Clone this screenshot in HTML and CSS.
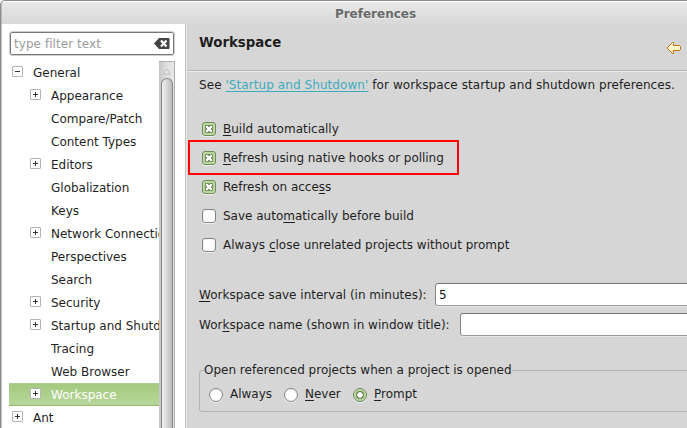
FILE: index.html
```html
<!DOCTYPE html>
<html lang="en">
<head>
<meta charset="utf-8">
<title>Preferences</title>
<link rel="stylesheet" href="styles.css">
</head>
<body>
<div class="window">
  <header class="titlebar">Preferences</header>
  <div class="body">
    <aside class="sidebar">
      <div class="filter">
        <span class="placeholder">type filter text</span>
        <svg class="clear" width="16" height="11" viewBox="0 0 16 11"><path d="M0 5.5 5 0h9.500q1 0 1 1v9q0 1-1 1H5Z" fill="#444"/><path d="M7 2.500l5.500 6M12.500 2.500l-5.500 6" stroke="#fff" stroke-width="2.200"/></svg>
      </div>
      <div class="tree-area">
        <ul class="tree">
          <li class="root"><i class="exp minus"></i><span>General</span></li>
          <li><i class="exp"></i><span>Appearance</span></li>
          <li><i class="none"></i><span>Compare/Patch</span></li>
          <li><i class="none"></i><span>Content Types</span></li>
          <li><i class="exp"></i><span>Editors</span></li>
          <li><i class="none"></i><span>Globalization</span></li>
          <li><i class="none"></i><span>Keys</span></li>
          <li><i class="exp"></i><span>Network Connections</span></li>
          <li><i class="none"></i><span>Perspectives</span></li>
          <li><i class="none"></i><span>Search</span></li>
          <li><i class="exp"></i><span>Security</span></li>
          <li><i class="exp"></i><span>Startup and Shutdown</span></li>
          <li><i class="none"></i><span>Tracing</span></li>
          <li><i class="none"></i><span>Web Browser</span></li>
          <li class="selected"><i class="exp"></i><span>Workspace</span></li>
          <li class="root"><i class="exp"></i><span>Ant</span></li>
        </ul>
        <div class="scrollbar">
          <svg width="8" height="7" viewBox="0 0 8 7"><path d="M4 .8 7 6.300H1Z" fill="#e6e6e6" stroke="#bbb" stroke-width=".8"/></svg>
          <div class="thumb"></div>
        </div>
      </div>
    </aside>
    <main class="page">
      <div class="heading">
        <h1>Workspace</h1>
        <svg class="back" width="16" height="14" viewBox="0 0 16 14"><defs><linearGradient id="g" x2="0" y2="1"><stop offset="0" stop-color="#fffdf0"/><stop offset="1" stop-color="#ffe9a0"/></linearGradient></defs><path d="M1 7 6.500 1.500H7.500V4.500H13.500L14.500 5.500V8.500L13.500 9.500H7.500V12.500H6.500Z" fill="url(#g)" stroke="#b87512" stroke-linejoin="round"/></svg>
      </div>
      <p class="intro">See <a>'Startup and Shutdown'</a> for workspace startup and shutdown preferences.</p>
      <div class="checks">
        <label><i class="box on"></i><span><u>B</u>uild automatically</span></label>
        <label class="marked"><i class="box on"></i><span><u>R</u>efresh using native hooks or polling</span></label>
        <label><i class="box on"></i><span>Refresh on acce<u>s</u>s</span></label>
        <label><i class="box"></i><span>Save auto<u>m</u>atically before build</span></label>
        <label><i class="box"></i><span>Always <u>c</u>lose unrelated projects without prompt</span></label>
      </div>
      <div class="fields">
        <div class="field"><span class="interval"><u>W</u>orkspace save interval (in minutes):</span><div class="input">5</div></div>
        <div class="field"><span class="name">Wor<u>k</u>space name (shown in window title):</span><div class="input"></div></div>
      </div>
      <fieldset class="group">
        <legend>Open referenced projects when a project is opened</legend>
        <div class="radios">
          <label class="always"><i class="radio"></i><span>Always</span></label>
          <label class="never"><i class="radio"></i><span><u>N</u>ever</span></label>
          <label><i class="radio on"></i><span><u>P</u>rompt</span></label>
        </div>
      </fieldset>
    </main>
  </div>
</div>
</body>
</html>
```
FILE: styles.css
```css
* { box-sizing: border-box; }
body {
  margin: 0;
  width: 687px;
  height: 428px;
  overflow: hidden;
  background: #fff;
  font: 12px/23px "DejaVu Sans", sans-serif;
  color: #1f1f1f;
  white-space: nowrap;
}
i { display: block; flex: none; }
u { text-decoration: underline 1px; text-underline-offset: 2px; text-decoration-skip-ink: none; }
.window {
  height: 428px;
  display: flex;
  flex-direction: column;
  background: #d6d6d6;
  border: solid #8c8a8c;
  border-width: 1px 0 0 1px;
  border-top-left-radius: 5px;
}
.titlebar {
  height: 23px;
  padding-left: 62px;
  text-align: center;
  font-weight: bold;
  line-height: 25px;
  color: #696969;
  text-shadow: 0 1px 0 #eee;
  background: linear-gradient(#e9e9e9, #d8d8d8);
  border-top: 1px solid #fff;
  border-left: 1px solid #bbb;
  border-top-left-radius: 4px;
}
.body { flex: 1; display: flex; min-height: 0; }
.sidebar {
  width: 184px;
  flex: none;
  padding: 7px 10px 0 7px;
  background: #fff;
  border-left: 1px solid #c4c4c4;
}
.filter {
  width: 166px;
  height: 25px;
  display: flex;
  align-items: center;
  justify-content: space-between;
  padding: 2px 4px 0 4px;
  border: 1px solid #cfcfcf;
  background: #fff;
  box-shadow: inset 0 0 0 1px #777;
  border-radius: 3px;
  color: #9c9c9c;
  letter-spacing: .06px;
}
.clear { margin-top: -2px; }
.tree-area { display: flex; height: 367px; margin-top: 5px; width: 166px; }
.tree { list-style: none; margin: 0; padding: 0; width: 150px; overflow: hidden; }
.tree li { height: 23px; display: flex; align-items: center; padding-left: 21px; }
.tree .root { padding-left: 3px; }
.tree span { margin-left: 10px; padding-top: 1px; }
.none { width: 11px; }
.exp {
  width: 11px;
  height: 11px;
  margin-top: -2px;
  border: 1px solid #b4b4b4;
  border-radius: 1px;
  background: linear-gradient(#333, #333) center / 5px 1px no-repeat, linear-gradient(#333, #333) center / 1px 5px no-repeat, #fff;
}
.minus { background: linear-gradient(#333, #333) center / 5px 1px no-repeat, #fff; }
.tree .selected {
  background: linear-gradient(#a3ca7f, #b8d69b);
  color: #fff;
  border-top: 1px solid #aecb93;
  border-bottom: 1px solid #94b774;
}
.scrollbar {
  width: 16px;
  padding-top: 6px;
  border: solid #b3ada7;
  border-width: 1px 1px 0 0;
  display: flex;
  flex-direction: column;
  align-items: center;
  background: linear-gradient(90deg, #c6c6c6, #dedede 50%, #e8e8e8);
}
.thumb {
  flex: 1;
  width: 12px;
  margin-top: 3px;
  border: 1px solid #858585;
  border-bottom: 0;
  border-radius: 6px 6px 0 0;
  background: linear-gradient(90deg, #f0f0f0, #bcbcbc);
}
.page {
  flex: 1;
  min-width: 0;
  border-left: 1px solid #c5c5c5;
  box-shadow: inset 1px 0 #e5e5e5;
  overflow: hidden;
}
.heading {
  height: 48px;
  display: flex;
  justify-content: space-between;
  padding: 7px 5px 0 12px;
  margin-left: 1px;
  border-bottom: 1px solid #eee;
  box-shadow: inset 0 -1px #b5b5b5;
}
h1 { margin: 0; font-size: 13.330px; line-height: 23px; }
.back { margin-top: 10px; }
.intro { margin: 0; height: 42px; padding: 2px 0 0 13px; letter-spacing: .075px; }
a { color: #3dadbd; text-decoration: underline; text-underline-offset: 2px; text-decoration-skip-ink: none; }
.checks label { height: 29px; display: flex; align-items: center; gap: 7px; padding-left: 16px; }
.checks span { padding-top: 1px; }
.checks .marked {
  width: 271px;
  height: 35px;
  margin: -3px 0 -3px 2px;
  padding-left: 12px;
  border: 2px solid #f00;
  letter-spacing: -.04px;
}
.box, .radio {
  width: 14px;
  height: 14px;
  border: 1px solid #858585;
  border-radius: 3px;
  background: #fff;
  box-shadow: inset 0 0 2px #ddd, 0 1px 0 #eee;
}
.box.on {
  border-color: #6f8c59;
  background:
    linear-gradient(45deg, transparent 34%, #fff 34% 66%, transparent 66%) center / 6px 6px no-repeat,
    linear-gradient(135deg, transparent 34%, #fff 34% 66%, transparent 66%) center / 6px 6px no-repeat,
    linear-gradient(#7d916c, #7d916c) center / 8px 8px no-repeat,
    #b3d891;
}
.fields { padding: 24px 0 0 13px; }
.field { height: 23px; margin-bottom: 7px; display: flex; line-height: 25px; }
.interval { width: 236px; flex: none; }
.name { width: 261px; flex: none; }
.input {
  flex: 1;
  height: 23px;
  padding-left: 3px;
  background: #fff;
  border: 1px solid #858585;
  border-color: #777 transparent #9a9a9a #858585;
  border-right: 0;
  border-radius: 3px 0 0 3px;
  line-height: 23px;
  color: #111;
  box-shadow: 0 1px #e6e6e6;
}
.group {
  height: 53px;
  margin: 23px -5px 0 13px;
  padding: 0 0 0 9px;
  border: 1px solid #b4b4b4;
  border-radius: 3px;
}
legend { margin-left: -5px; padding: 0; line-height: 23px; }
.radios { display: flex; padding-top: 1px; }
.radios label { display: flex; align-items: center; gap: 7px; }
.always { width: 75px; }
.never { width: 69px; }
.radio { border-radius: 50%; }
.radio.on {
  border-color: #6f8c59;
  background: radial-gradient(circle, #fff 0 2.500px, #71875d 3px 4px, #b3d891 4.500px);
}
```
